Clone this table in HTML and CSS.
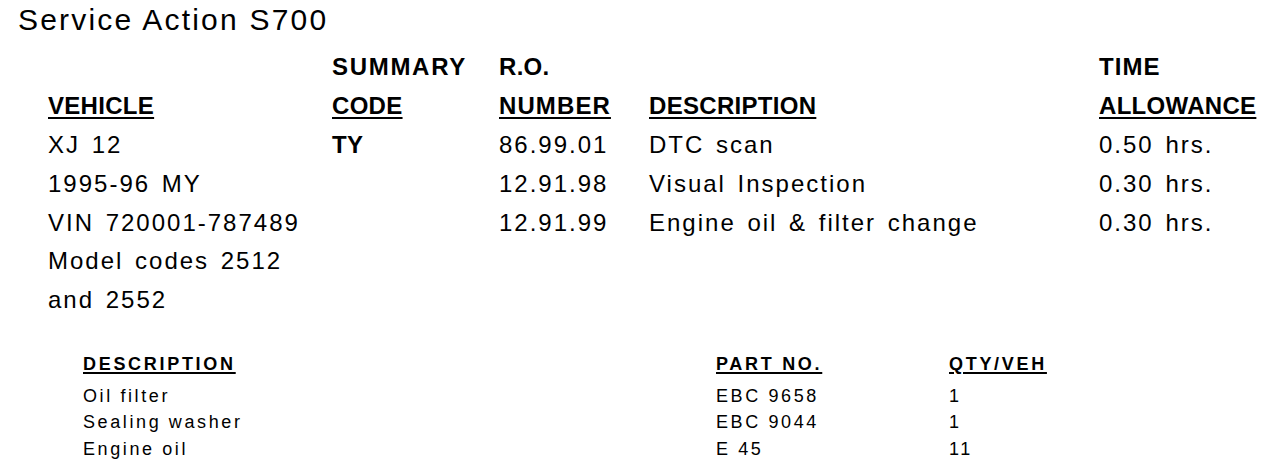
FILE: index.html
```html
<!DOCTYPE html>
<html lang="en">
<head>
<meta charset="utf-8">
<title>Service Action S700</title>
<link rel="stylesheet" href="styles.css">
</head>
<body>
<h1 class="title">Service Action S700</h1>

<div class="labour">
  <div class="hd"></div>
  <div class="hd hd-wide">SUMMARY</div>
  <div class="hd">R.O.</div>
  <div class="hd"></div>
  <div class="hd hd-mid">TIME</div>

  <div class="hd"><u>VEHICLE</u></div>
  <div class="hd"><u>CODE</u></div>
  <div class="hd hd-mid"><u>NUMBER</u></div>
  <div class="hd"><u>DESCRIPTION</u></div>
  <div class="hd"><u>ALLOWANCE</u></div>

  <div class="cell">XJ 12</div>
  <div class="cell bold">TY</div>
  <div class="cell">86.99.01</div>
  <div class="cell">DTC scan</div>
  <div class="cell">0.50 hrs.</div>

  <div class="cell">1995-96 MY</div>
  <div class="cell"></div>
  <div class="cell">12.91.98</div>
  <div class="cell">Visual Inspection</div>
  <div class="cell">0.30 hrs.</div>

  <div class="cell">VIN 720001-787489</div>
  <div class="cell"></div>
  <div class="cell">12.91.99</div>
  <div class="cell">Engine oil &amp; filter change</div>
  <div class="cell">0.30 hrs.</div>

  <div class="cell">Model codes 2512</div>
  <div class="cell"></div>
  <div class="cell"></div>
  <div class="cell"></div>
  <div class="cell"></div>

  <div class="cell">and 2552</div>
  <div class="cell"></div>
  <div class="cell"></div>
  <div class="cell"></div>
  <div class="cell"></div>
</div>

<div class="parts">
  <div class="phd"><u>DESCRIPTION</u></div>
  <div class="phd"><u>PART NO.</u></div>
  <div class="phd"><u>QTY/VEH</u></div>

  <div class="pcell">Oil filter</div>
  <div class="pcell">EBC 9658</div>
  <div class="pcell">1</div>

  <div class="pcell">Sealing washer</div>
  <div class="pcell">EBC 9044</div>
  <div class="pcell">1</div>

  <div class="pcell">Engine oil</div>
  <div class="pcell">E 45</div>
  <div class="pcell">11</div>
</div>
</body>
</html>
```

FILE: styles.css
```css
html, body {
  margin: 0;
  padding: 0;
  background: #ffffff;
  color: #000000;
  font-family: "Liberation Sans", Arial, Helvetica, sans-serif;
}

.title {
  margin: 2px 0 0 0;
  padding-left: 18px;
  font-size: 30px;
  font-weight: normal;
  line-height: 36px;
  letter-spacing: 2.2px;
  white-space: nowrap;
}

.labour {
  display: grid;
  grid-template-columns: 284px 167px 150px 450px 1fr;
  grid-auto-rows: 38.83px;
  margin-top: 10.3px;
  padding-left: 48px;
  font-size: 24px;
  line-height: 38.83px;
  white-space: nowrap;
}

.hd {
  font-weight: bold;
  letter-spacing: 0.3px;
}

.hd-wide {
  letter-spacing: 1.7px;
}

.hd-mid {
  letter-spacing: 1.1px;
}

.hd u,
.phd u {
  text-decoration: underline;
  text-decoration-thickness: 2px;
}

.hd u {
  text-underline-offset: 3px;
}

.cell {
  letter-spacing: 2px;
  word-spacing: 3px;
}

.bold {
  font-weight: bold;
  letter-spacing: 0.4px;
}

.parts {
  display: grid;
  grid-template-columns: 633px 233px 1fr;
  grid-template-rows: 32px;
  grid-auto-rows: 26.5px;
  margin-top: 30.5px;
  padding-left: 83px;
  font-size: 18px;
  line-height: 26.5px;
  white-space: nowrap;
}

.phd {
  font-weight: bold;
  letter-spacing: 2.7px;
}

.phd u {
  text-underline-offset: 1.5px;
}

.pcell {
  letter-spacing: 2.6px;
}
```
